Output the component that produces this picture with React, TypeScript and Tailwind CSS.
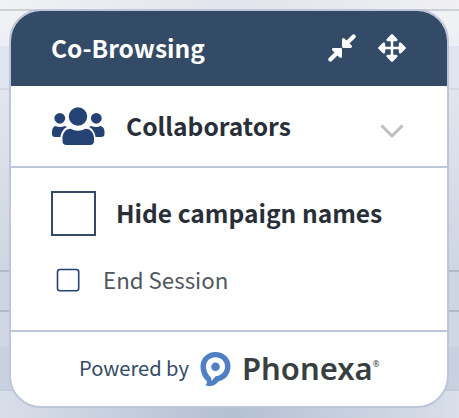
const bars = [
  "h-[9px] bg-linear-to-r from-[#f1f2f5] via-[#e1e4ec] to-[#f0f0f2]",
  "h-[2px] bg-[#cfd1d6]",
  "h-[35px] bg-linear-to-b from-[#f1f2f5] to-[#edeff4]",
  "h-[42px] bg-[#e0e4ee]",
  "h-[2px] bg-[#d5d8df]",
  "h-[180px] bg-linear-to-b from-[#e1e5ed] to-[#cfd5e2]",
  "h-[2px] bg-[#b4bac8]",
  "h-[38px] bg-[#cdd4e2]",
  "h-[2px] bg-[#b3b9c6]",
  "h-[35px] bg-[#d0d6e3]",
  "h-[42px] bg-[#c9d1e0]",
  "h-[2px] bg-[#c3cad8]",
  "h-[27px] bg-linear-to-r from-[#d9dfe9] via-[#b4c0d4] to-[#d9dfe9]",
];

function Backdrop() {
  return (
    <div className="col-start-1 row-start-1 flex flex-col">
      {bars.map((bar, i) => (
        <div key={i} className={bar} />
      ))}
    </div>
  );
}

function CompressIcon() {
  return (
    <svg width="28" height="28" viewBox="0 0 28 28" fill="white" stroke="white" strokeLinejoin="round" strokeLinecap="round">
      <path d="M25.6 2.4L19 9M2.4 25.6L9 19" strokeWidth="4.2" />
      <path d="M15.4 5.4V12.6H22.6ZM12.6 22.6V15.4H5.4Z" strokeWidth="2.8" />
    </svg>
  );
}

function MoveIcon() {
  return (
    <svg width="28" height="28" viewBox="0 0 28 28" fill="white" stroke="white" strokeLinejoin="round">
      <path d="M14 4V24M4 14H24" strokeWidth="2.5" />
      <path d="M14 1.5L18.3 5.9H9.7ZM14 26.5L18.3 22.1H9.7ZM1.5 14L5.9 9.7V18.3ZM26.5 14L22.1 9.7V18.3Z" strokeWidth="2.6" />
    </svg>
  );
}

function PinLogo() {
  return (
    <svg width="31" height="35" viewBox="0 0 31 35" className="shrink-0">
      <path
        fill="#4e80c3"
        fillRule="evenodd"
        d="M15.5 0C24 0 30.5 6.2 30.5 14.2C30.5 22.5 25 28 18.5 29.3C16.5 32.5 12 35.5 5 33.3C6.7 32.4 7.1 30.8 6.7 28.8C3 26 .5 20.5.5 14.5C.5 6.2 7 0 15.5 0ZM15.5 5.3C10 5.3 6 9.2 6 14.5C6 20 9 23.5 11 25.5L11.6 29L15.5 24.2C21 23.8 25 19.8 25 14.5C25 9.2 21 5.3 15.5 5.3Z"
      />
      <circle cx="15.5" cy="14.8" r="4.3" fill="#4e80c3" />
    </svg>
  );
}

export default function App() {
  return (
    <div className="grid h-[418px] w-[459px] overflow-hidden font-['Noto_Sans_CJK_SC',sans-serif] text-[#282f38]">
      <Backdrop />
      <main className="z-10 col-start-1 row-start-1 mt-[9px] ml-[9px] flex h-[399px] w-[440px] flex-col overflow-hidden rounded-[32px] border-2 border-[#bdc5da] bg-white">
        <header className="flex h-[75px] shrink-0 items-center bg-[#344b67] pr-[41px] pl-10 text-white">
          <h1 className="grow text-[24.5px] leading-none font-bold">Co-Browsing</h1>
          <div className="mb-px flex gap-[22px]">
            <CompressIcon />
            <MoveIcon />
          </div>
        </header>
        <section className="flex h-[82px] shrink-0 items-center border-b-2 border-[#bdc5da] pr-[43px] pl-10">
          <svg width="54" height="38" viewBox="0 0 54 38" fill="#244274" className="mb-px">
            <circle cx="27" cy="9.5" r="9.2" />
            <circle cx="8.8" cy="11.3" r="5.4" />
            <circle cx="45.3" cy="11.3" r="5.4" />
            <path d="M19.5 21.8Q27 25.5 34.5 21.8C40 21.8 43 26.5 43 31.5V34Q43 38 39 38H15.5Q11.5 38 11.5 34V31.5C11.5 26.5 14.5 21.8 19.5 21.8Z" />
            <path d="M4.5 19Q8.8 21 14 19L16 20C12.5 21.5 10 25.5 9.5 30H4Q1 30 1 27V25Q1 20 4.5 19ZM49.5 19Q45.3 21 40 19L38 20C41.5 21.5 44 25.5 44.5 30H50Q53.5 30 53.5 27V25Q53.5 20 49.5 19Z" />
          </svg>
          <h2 className="ml-[21px] grow pb-[2px] text-[24.6px] leading-none font-bold">Collaborators</h2>
          <svg width="24" height="15" viewBox="0 0 24 15" fill="none" stroke="#bfbfbf" strokeWidth="3" className="mt-[11px]">
            <path d="M1.5 1.5L12 12L22.5 1.5" />
          </svg>
        </section>
        <section className="flex h-[164px] shrink-0 flex-col border-b-2 border-[#bdc5da] pt-[23px] pl-10">
          <label className="flex items-center">
            <span className="size-[45px] border-2 border-[#344b67]" />
            <span className="ml-5 text-[24.55px] leading-none font-bold">Hide campaign names</span>
          </label>
          <label className="mt-8 flex items-center pl-[5px] text-[#51565e]">
            <svg width="24" height="24" viewBox="0 0 24 24" fill="none" stroke="#244274" strokeWidth="1.6">
              <rect x="1.5" y="1.5" width="21.2" height="21.2" rx="2.4" />
            </svg>
            <span className="ml-[23px] pb-[2px] text-[22.3px] leading-none">End Session</span>
          </label>
        </section>
        <footer className="flex grow items-center pb-[2px] pl-[68px] text-[#344b67]">
          <span className="w-[109px] text-[20.1px] leading-none whitespace-nowrap">Powered by</span>
          <span className="mt-[2px] ml-3"><PinLogo /></span>
          <span className="ml-[11px] font-['Noto_Sans',sans-serif] text-[31px] leading-none font-semibold text-[#383f42]">Phonexa</span>
          <span className="mb-2 font-['Noto_Sans',sans-serif] text-[8px] leading-none text-[#383f42]">®</span>
        </footer>
      </main>
    </div>
  );
}
